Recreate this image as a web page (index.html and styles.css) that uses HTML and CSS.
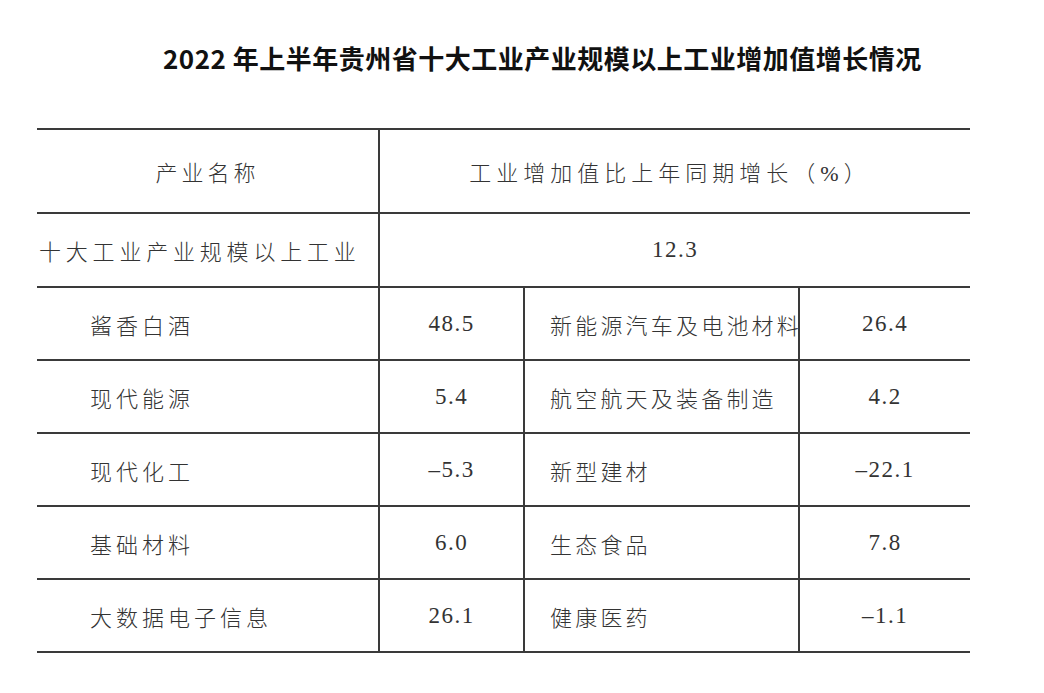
FILE: index.html
```html
<!DOCTYPE html>
<html lang="zh-CN">
<head>
<meta charset="utf-8">
<title>2022年上半年贵州省十大工业产业规模以上工业增加值增长情况</title>
<link rel="stylesheet" href="styles.css">
</head>
<body>
<div class="page">
  <h1 class="title">2022 年上半年贵州省十大工业产业规模以上工业增加值增长情况</h1>
  <div class="table">
    <div class="row head">
      <div class="cell c-center">产业名称</div>
      <div class="cell span3 c-center bl c-headval">工业增加值比上年同期增长（%）</div>
    </div>
    <div class="row total">
      <div class="cell c-total">十大工业产业规模以上工业</div>
      <div class="cell span3 c-center bl num">12.3</div>
    </div>
    <div class="row">
      <div class="cell name1">酱香白酒</div>
      <div class="cell c-center bl num">48.5</div>
      <div class="cell name2 bl">新能源汽车及电池材料</div>
      <div class="cell c-center bl num">26.4</div>
    </div>
    <div class="row">
      <div class="cell name1">现代能源</div>
      <div class="cell c-center bl num">5.4</div>
      <div class="cell name2 bl">航空航天及装备制造</div>
      <div class="cell c-center bl num">4.2</div>
    </div>
    <div class="row">
      <div class="cell name1">现代化工</div>
      <div class="cell c-center bl num">–5.3</div>
      <div class="cell name2 bl">新型建材</div>
      <div class="cell c-center bl num">–22.1</div>
    </div>
    <div class="row">
      <div class="cell name1">基础材料</div>
      <div class="cell c-center bl num">6.0</div>
      <div class="cell name2 bl">生态食品</div>
      <div class="cell c-center bl num">7.8</div>
    </div>
    <div class="row">
      <div class="cell name1">大数据电子信息</div>
      <div class="cell c-center bl num">26.1</div>
      <div class="cell name2 bl">健康医药</div>
      <div class="cell c-center bl num">–1.1</div>
    </div>
  </div>
</div>
</body>
</html>
```
FILE: styles.css
```css
html, body {
  margin: 0;
  padding: 0;
  background: #ffffff;
}

.page {
  width: 1044px;
  height: 693px;
  padding-top: 43px;
  box-sizing: border-box;
}

.title {
  margin: 0 0 0 163px;
  font-family: "Noto Sans CJK SC", "Liberation Sans", sans-serif;
  font-weight: 700;
  font-size: 26px;
  line-height: 30px;
  letter-spacing: 0.5px;
  color: #111111;
  white-space: nowrap;
}

.table {
  margin: 55px 0 0 37px;
  width: 933px;
  border-top: 2px solid #3a3a3a;
  font-family: "Liberation Serif", "Noto Sans CJK SC", serif;
  color: #333333;
  font-size: 22px;
}

.row {
  display: grid;
  grid-template-columns: 341px 145px 275px 172px;
  height: 73px;
  box-sizing: border-box;
  border-bottom: 2px solid #3a3a3a;
}

.row.head {
  height: 84px;
}

.row.total {
  height: 74px;
}

.cell {
  display: flex;
  align-items: center;
  font-weight: 300;
  letter-spacing: 4px;
  white-space: nowrap;
}

.span3 {
  grid-column: 2 / 5;
}

.bl {
  border-left: 2px solid #3a3a3a;
}

.c-center {
  justify-content: center;
}

.c-headval {
  letter-spacing: 5px;
  padding-right: 10px;
}

.c-total {
  padding-left: 2px;
  letter-spacing: 4.8px;
}

.name1 {
  padding-left: 53px;
}

.name2 {
  padding-left: 25px;
  letter-spacing: 3.2px;
}

.num {
  font-family: "Liberation Serif", serif;
  font-weight: 400;
  letter-spacing: 1.5px;
  font-size: 23px;
}
```
